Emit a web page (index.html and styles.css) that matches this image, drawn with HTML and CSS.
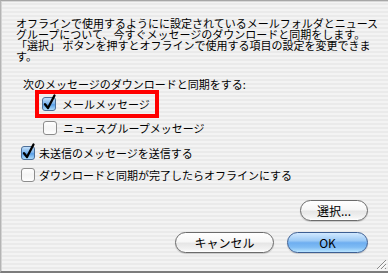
FILE: index.html
```html
<!DOCTYPE html>
<html lang="ja">
<head>
<meta charset="utf-8">
<link rel="stylesheet" href="styles.css">
</head>
<body>
<div class="sheet">
  <p class="msg">オフラインで使用するようにに設定されているメールフォルダとニュース<br>グループについて、今すぐメッセージのダウンロードと同期をします。<br>「選択」 ボタンを押すとオフラインで使用する項目の設定を変更できま<br>す。</p>
  <p class="lead">次のメッセージのダウンロードと同期をする:</p>
  <div class="highlight">
    <label class="opt">
      <svg class="cb" width="14" height="14" viewBox="0 0 14 14"><defs><linearGradient id="bl" x1="0" y1="0" x2="0" y2="1"><stop offset="0" stop-color="#c9e3fb"/><stop offset="0.45" stop-color="#7fb6ec"/><stop offset="0.55" stop-color="#5a9fe6"/><stop offset="1" stop-color="#b4e2ff"/></linearGradient></defs><rect x="0.5" y="0.5" width="13" height="13" rx="2.5" fill="url(#bl)" stroke="#4d6f98"/><path d="M3 7.2 L6 11 L12.5 -1.5" fill="none" stroke="#000" stroke-width="2.3" stroke-linecap="round" stroke-linejoin="round"/></svg>
      <span>メールメッセージ</span>
    </label>
  </div>
  <label class="opt sub">
    <svg class="cb" width="14" height="14" viewBox="0 0 14 14"><defs><linearGradient id="wh" x1="0" y1="0" x2="0" y2="1"><stop offset="0" stop-color="#ffffff"/><stop offset="0.5" stop-color="#f4f4f4"/><stop offset="1" stop-color="#ffffff"/></linearGradient></defs><rect x="0.5" y="0.5" width="13" height="13" rx="2.5" fill="url(#wh)" stroke="#8c8c8c"/></svg>
    <span>ニュースグループメッセージ</span>
  </label>
  <label class="opt top">
    <svg class="cb" width="14" height="14" viewBox="0 0 14 14"><rect x="0.5" y="0.5" width="13" height="13" rx="2.5" fill="url(#bl)" stroke="#4d6f98"/><path d="M3 7.2 L6 11 L12.5 -1.5" fill="none" stroke="#000" stroke-width="2.3" stroke-linecap="round" stroke-linejoin="round"/></svg>
    <span>未送信のメッセージを送信する</span>
  </label>
  <label class="opt top last">
    <svg class="cb" width="14" height="14" viewBox="0 0 14 14"><rect x="0.5" y="0.5" width="13" height="13" rx="2.5" fill="url(#wh)" stroke="#8c8c8c"/></svg>
    <span>ダウンロードと同期が完了したらオフラインにする</span>
  </label>
  <div class="actions">
    <div class="row"><button class="btn select">選択...</button></div>
    <div class="row main"><button class="btn cancel">キャンセル</button><button class="btn ok">OK</button></div>
  </div>
  <svg class="grip" width="12" height="12" viewBox="0 0 12 12"><path d="M11 2 L2 11 M11 6 L6 11 M11 10 L10 11" stroke="#8a8a8a" stroke-width="1"/><path d="M11.5 3 L3 11.5 M11.5 7 L7 11.5" stroke="#fff" stroke-width="1"/></svg>
</div>
</body>
</html>
```
FILE: styles.css
```css
html, body {
  margin: 0;
  padding: 0;
  background: #ededed;
}
.sheet {
  position: relative;
  box-sizing: border-box;
  width: 388px;
  height: 273px;
  border-top: 1px solid #a6a6a6;
  border-left: 1px solid #b4b4b4;
  border-bottom: 2px solid #7c7c7c;
  box-shadow: inset 1px 0 0 #d4d4d4, inset 0 1px 0 #d8d8d8;
  background: repeating-linear-gradient(to bottom, #f3f3f3 0, #f3f3f3 2px, #eaeaea 2px, #eaeaea 4px);
  font-family: "Noto Sans CJK JP", sans-serif;
  color: #000;
  font-size: 11px;
  overflow: hidden;
}
.msg {
  margin: 17px 0 0 15px;
  line-height: 11px;
  white-space: nowrap;
}
.lead {
  margin: 17px 0 0 22px;
  line-height: 11px;
  white-space: nowrap;
}
.highlight {
  display: inline-block;
  margin-left: 34px;
  border: 4px solid #ff0000;
  padding: 0 5px 0 3px;
}
.opt {
  display: flex;
  align-items: center;
  height: 20px;
  white-space: nowrap;
  line-height: 11px;
}
.opt .cb {
  flex: none;
  overflow: visible;
  margin-right: 6px;
}
.opt.sub {
  margin-left: 42px;
}
.opt.top {
  margin-left: 20px;
  margin-top: 5px;
}
.opt.top .cb {
  margin-right: 4px;
}
.opt.last {
  margin-top: 2px;
}
.actions {
  display: flex;
  flex-direction: column;
  align-items: flex-end;
  gap: 11px;
  margin: 15px 20px 0 0;
}
.row {
  display: flex;
  gap: 13px;
}
.btn {
  box-sizing: border-box;
  height: 21px;
  border: 1px solid #6b6b6b;
  border-radius: 11px;
  background: linear-gradient(to bottom, #ffffff 0%, #f7f7f7 45%, #e6e6e6 55%, #f2f2f2 85%, #ffffff 100%);
  box-shadow: 0 1px 1px rgba(0,0,0,0.18);
  font-family: "Noto Sans CJK JP", sans-serif;
  font-size: 12px;
  line-height: 18px;
  color: #000;
  padding: 0;
}
.select { width: 68px; }
.cancel { width: 99px; }
.ok {
  width: 81px;
  border-color: #3d5f93;
  background: linear-gradient(to bottom, #d2e9ff 0%, #9ccaf6 40%, #6eaef0 52%, #7fbcf4 75%, #b9e4ff 100%);
}
.grip {
  position: absolute;
  right: 1px;
  bottom: 1px;
}
```
